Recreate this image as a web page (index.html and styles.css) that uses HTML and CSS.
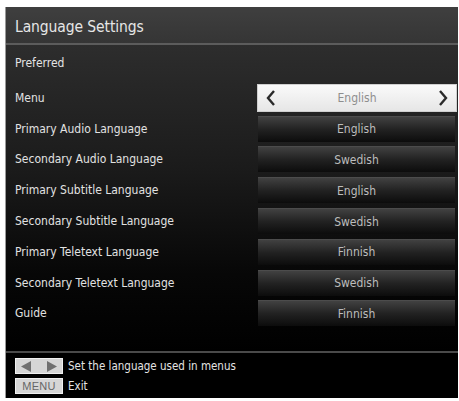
FILE: index.html
```html
<!DOCTYPE html>
<html>
<head>
<meta charset="utf-8">
<link rel="stylesheet" href="styles.css">
</head>
<body>
<div class="panel">
  <div class="title">Language Settings</div>
  <div class="content">
    <div class="section">Preferred</div>
    <div class="row">
      <div class="label">Menu</div>
      <div class="value active">
        <svg class="chev" width="10" height="16" viewBox="0 0 10 16"><path d="M8 1 L2 8 L8 15" fill="none" stroke="#2a2a2a" stroke-width="2.4"/></svg>
        <span>English</span>
        <svg class="chev" width="10" height="16" viewBox="0 0 10 16"><path d="M2 1 L8 8 L2 15" fill="none" stroke="#2a2a2a" stroke-width="2.4"/></svg>
      </div>
    </div>
    <div class="row"><div class="label">Primary Audio Language</div><div class="value">English</div></div>
    <div class="row"><div class="label">Secondary Audio Language</div><div class="value">Swedish</div></div>
    <div class="row"><div class="label">Primary Subtitle Language</div><div class="value">English</div></div>
    <div class="row"><div class="label">Secondary Subtitle Language</div><div class="value">Swedish</div></div>
    <div class="row"><div class="label">Primary Teletext Language</div><div class="value">Finnish</div></div>
    <div class="row"><div class="label">Secondary Teletext Language</div><div class="value">Swedish</div></div>
    <div class="row"><div class="label">Guide</div><div class="value">Finnish</div></div>
  </div>
  <div class="footer">
    <div class="hint">
      <span class="key arrows">
        <svg width="46" height="13" viewBox="0 0 46 13"><path d="M5 6.5 L15 1 L15 12 Z" fill="#707070"/><path d="M41 6.5 L31 1 L31 12 Z" fill="#707070"/></svg>
      </span>
      <span class="htext">Set the language used in menus</span>
    </div>
    <div class="hint">
      <span class="key menu">MENU</span>
      <span class="htext">Exit</span>
    </div>
  </div>
</div>
</body>
</html>
```
FILE: styles.css
```css
html, body {
  margin: 0;
  padding: 0;
  background: #ffffff;
}
body {
  width: 459px;
  height: 401px;
  overflow: hidden;
  font-family: "DejaVu Sans Condensed", "DejaVu Sans", sans-serif;
}
.panel {
  margin: 7px 1px 0 5px;
  width: 452px;
  height: 391px;
  display: flex;
  flex-direction: column;
  border-left: 1px solid #9a9a9a;
  background: #000;
}
.title {
  height: 38px;
  box-sizing: border-box;
  padding: 11px 0 0 9px;
  font-size: 15.5px;
  color: #e6e6e6;
  background: linear-gradient(#3f3f3f, #353535);
  border-bottom: 2px solid #5c5c5c;
  letter-spacing: -0.1px;
}
.content {
  flex: 1;
  display: flex;
  flex-direction: column;
  background: linear-gradient(#2d2d2d 0%, #1b1b1b 40%, #070707 75%, #000 100%);
}
.section {
  height: 37.5px;
  box-sizing: border-box;
  padding: 11px 0 0 9px;
  font-size: 12px;
  color: #e4e4e4;
}
.row {
  height: 30.8px;
  display: flex;
  align-items: center;
  justify-content: space-between;
  padding: 0 3px 0 9px;
}
.label {
  font-size: 12px;
  color: #e2e2e2;
}
.value {
  width: 197px;
  height: 26px;
  display: flex;
  align-items: center;
  justify-content: center;
  font-size: 12px;
  color: #bdbdbd;
  background: linear-gradient(#414141, #222 50%, #0c0c0c);
  border-top: 1px solid #4c4c4c;
  box-sizing: border-box;
}
.value.active {
  width: 200px;
  height: 28px;
  justify-content: space-between;
  padding: 0 8px 0 8px;
  color: #8e8e8e;
  background: linear-gradient(#fafafa, #e6e6e6);
  border: 1px solid #cfcfcf;
  margin-right: -2px;
}
.chev {
  display: block;
}
.footer {
  height: 47px;
  box-sizing: border-box;
  border-top: 2px solid #4a4a4a;
  padding: 5px 0 0 9px;
  display: flex;
  flex-direction: column;
  gap: 4px;
  background: #000;
}
.hint {
  display: flex;
  align-items: center;
  gap: 5px;
  height: 16px;
}
.key {
  width: 48px;
  height: 16px;
  box-sizing: border-box;
  background: #d6d6d6;
  border: 1px solid #f0f0f0;
  display: flex;
  align-items: center;
  justify-content: center;
}
.key.menu {
  font-family: "Liberation Sans", Arial, sans-serif;
  font-size: 11px;
  color: #666;
  letter-spacing: 0.3px;
}
.htext {
  font-size: 11.5px;
  color: #e4e4e4;
}
```
